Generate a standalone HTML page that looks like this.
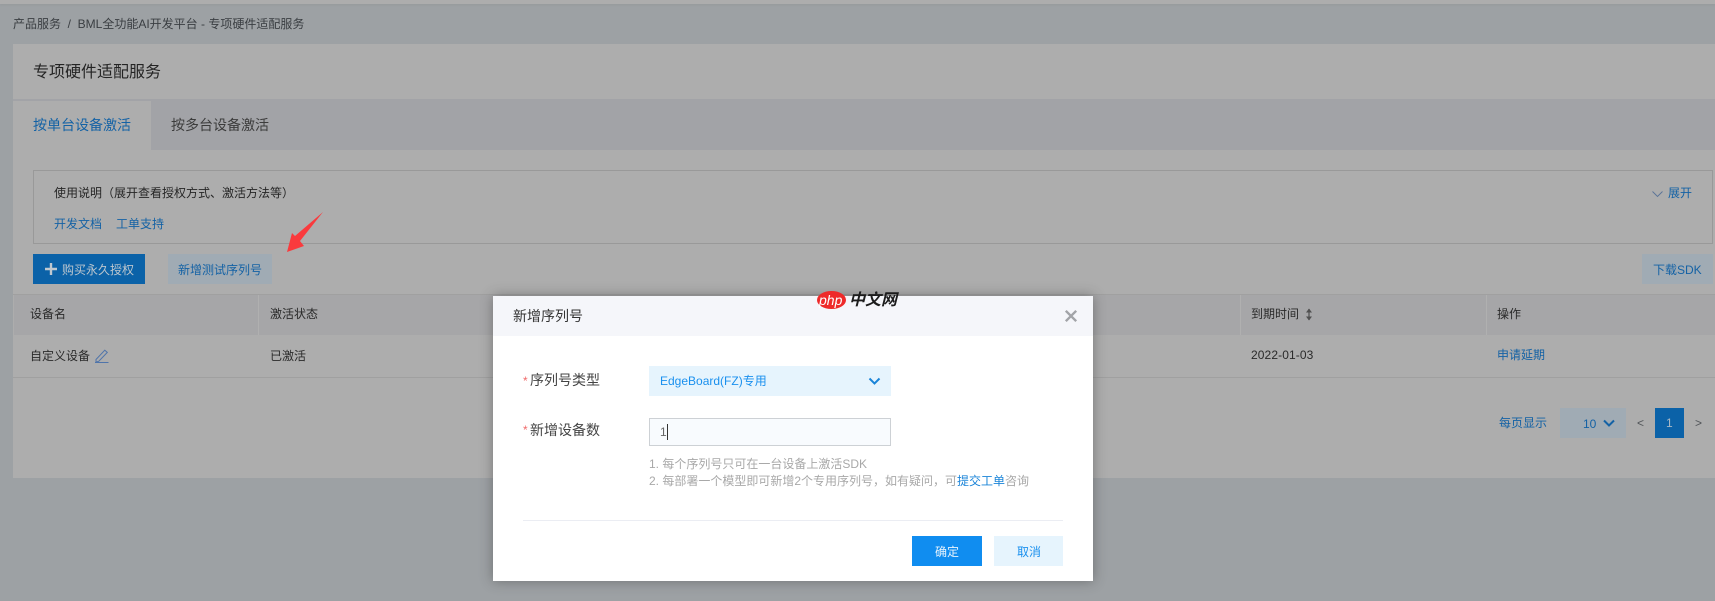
<!DOCTYPE html>
<html lang="zh"><head><meta charset="utf-8"><title>专项硬件适配服务</title>
<style>
html,body{margin:0;padding:0;width:1715px;height:601px;overflow:hidden;background:#9da1a4}
body{position:relative;font-family:"Liberation Sans","Noto Sans CJK SC",sans-serif;font-size:12px;color:#2a2a2a}
.a{position:absolute;box-sizing:border-box}
.t{position:absolute;white-space:nowrap;line-height:18px;height:18px}
.b{color:#1462a5}
svg{position:absolute;overflow:visible}
</style></head><body>
<div class="a" style="left:0;top:0;width:1715px;height:4px;background:#adadad;box-shadow:0 1px 2px rgba(120,120,120,.2)"></div>
<div class="t" style="left:13px;top:15px;color:#3a3e42">产品服务 &nbsp;/ &nbsp;BML全功能AI开发平台 - 专项硬件适配服务</div>

<div class="a" style="left:13px;top:44px;width:1702px;height:434px;background:#adadad"></div>
<div class="a" style="left:13px;top:99px;width:1702px;height:51px;background:#a2a3a7"></div>
<div class="a" style="left:13px;top:101px;width:138px;height:49px;background:#adadad"></div>
<div class="t" style="left:33px;top:62px;font-size:16px;line-height:22px;height:22px;color:#242424">专项硬件适配服务</div>
<div class="t b" style="left:33px;top:115px;font-size:14px;line-height:20px;height:20px">按单台设备激活</div>
<div class="t" style="left:171px;top:115px;font-size:14px;line-height:20px;height:20px;color:#3c3c3c">按多台设备激活</div>

<div class="a" style="left:33px;top:170px;width:1680px;height:74px;border:1px solid #999"></div>
<div class="t" style="left:54px;top:184px;color:#262626">使用说明（展开查看授权方式、激活方法等）</div>
<div class="t b" style="left:54px;top:215px">开发文档</div>
<div class="t b" style="left:116px;top:215px">工单支持</div>
<svg style="left:1652px;top:190px" width="11" height="8"><path d="M.5 1.5 5.5 6.5 10.5 1.5" fill="none" stroke="#5a7397" stroke-width=".9"/></svg>
<div class="t b" style="left:1668px;top:184px">展开</div>

<div class="a" style="left:33px;top:254px;width:112px;height:30px;background:#0b62a8"></div>
<svg style="left:45px;top:263px" width="12" height="12"><path d="M6 0V12M0 6H12" stroke="#c0c9d0" stroke-width="2.4"/></svg>
<div class="t" style="left:62px;top:261px;color:#bcc6ce">购买永久授权</div>
<div class="a" style="left:168px;top:254px;width:104px;height:30px;background:#a0abb4"></div>
<div class="t b" style="left:178px;top:261px">新增测试序列号</div>
<div class="a" style="left:1642px;top:254px;width:71px;height:30px;background:#a0abb4"></div>
<div class="t b" style="left:1653px;top:261px">下载SDK</div>
<svg style="left:0;top:0" width="1715" height="300"><path d="M323 212 295 236 292 233 287 252 304 246 300 241Z" fill="#fa3a3d"/></svg>

<div class="a" style="left:13px;top:294px;width:1702px;height:1px;background:#a0a0a0"></div>
<div class="a" style="left:14px;top:295px;width:1701px;height:40px;background:#a6a6a8"></div>
<div class="a" style="left:258px;top:295px;width:1px;height:40px;background:#b0b0b0"></div>
<div class="a" style="left:1240px;top:295px;width:1px;height:40px;background:#b0b0b0"></div>
<div class="a" style="left:1486px;top:295px;width:1px;height:40px;background:#b0b0b0"></div>
<div class="a" style="left:13px;top:377px;width:1702px;height:1px;background:#a0a0a0"></div>
<div class="t" style="left:30px;top:305px">设备名</div>
<div class="t" style="left:270px;top:305px">激活状态</div>
<div class="t" style="left:1251px;top:305px">到期时间</div>
<svg style="left:1305px;top:308px" width="8" height="13"><path d="M4 1V12" fill="none" stroke="#505050" stroke-width="1.200"/><path d="M1 4.500 4 .5 7 4.500ZM1 8.500 4 12.500 7 8.500Z" fill="#505050"/></svg>
<div class="t" style="left:1497px;top:305px">操作</div>
<div class="t" style="left:30px;top:347px">自定义设备</div>
<svg style="left:95px;top:349px" width="14" height="14"><path d="M1 10.500 9.800 1.200 12.300 3.400 3.700 12.300 1 13ZM0 13.500H13.500" fill="none" stroke="#4f74aa" stroke-width="1"/></svg>
<div class="t" style="left:270px;top:347px">已激活</div>
<div class="t" style="left:1251px;top:346px;letter-spacing:.1px">2022-01-03</div>
<div class="t b" style="left:1497px;top:346px">申请延期</div>

<div class="t b" style="left:1499px;top:414px">每页显示</div>
<div class="a" style="left:1560px;top:408px;width:66px;height:30px;background:#a0abb4"></div>
<div class="t b" style="left:1583px;top:415px">10</div>
<svg style="left:1603px;top:419px" width="12" height="9"><path d="M1 1.500 6 6.500 11 1.500" fill="none" stroke="#1462a5" stroke-width="2"/></svg>
<div class="t" style="left:1637px;top:414px;color:#505458">&lt;</div>
<div class="a" style="left:1655px;top:408px;width:29px;height:30px;background:#0b62a8"></div>
<div class="t" style="left:1666px;top:414px;color:#a9b9c6">1</div>
<div class="t" style="left:1695px;top:414px;color:#505458">&gt;</div>

<div class="a" style="left:493px;top:296px;width:600px;height:285px;background:#fff;box-shadow:0 0 12px rgba(50,50,50,.45)"></div>
<div class="a" style="left:493px;top:296px;width:600px;height:40px;background:#f5f6fa"></div>
<div class="t" style="left:513px;top:306px;font-size:14px;line-height:20px;height:20px;color:#333">新增序列号</div>
<svg style="left:1065px;top:310px" width="12" height="12"><path d="M.800.800 11.200 11.200M11.200.800.800 11.200" stroke="#a2a4a8" stroke-width="2.400"/></svg>

<div class="t" style="left:523px;top:372px;color:#f06a6a;font-size:12px">*</div>
<div class="t" style="left:530px;top:370px;font-size:14px;line-height:20px;height:20px;color:#444">序列号类型</div>
<div class="a" style="left:649px;top:366px;width:242px;height:30px;background:#e6f4fd"></div>
<div class="t" style="left:660px;top:372px;color:#1a90ee">EdgeBoard(FZ)专用</div>
<svg style="left:868px;top:377px" width="13" height="9"><path d="M1.500 1.500 6.500 6.500 11.500 1.500" fill="none" stroke="#1a84d8" stroke-width="2"/></svg>

<div class="t" style="left:523px;top:421px;color:#f06a6a;font-size:12px">*</div>
<div class="t" style="left:530px;top:420px;font-size:14px;line-height:20px;height:20px;color:#444">新增设备数</div>
<div class="a" style="left:649px;top:418px;width:242px;height:28px;border:1px solid #cdd1d5;background:#f8fbfe"></div>
<div class="t" style="left:660px;top:423px;color:#666">1</div>
<div class="a" style="left:667px;top:424px;width:1px;height:16px;background:#333"></div>
<div class="t" style="left:649px;top:455px;color:#a8a8a8">1. 每个序列号只可在一台设备上激活SDK</div>
<div class="t" style="left:649px;top:472px;color:#a8a8a8">2. 每部署一个模型即可新增2个专用序列号，如有疑问，可<span style="color:#1a84d8">提交工单</span>咨询</div>
<div class="a" style="left:523px;top:520px;width:540px;height:1px;background:#ebedf3"></div>
<div class="a" style="left:912px;top:536px;width:70px;height:30px;background:#108df0"></div>
<div class="t" style="left:935px;top:543px;color:#e8f4fd">确定</div>
<div class="a" style="left:994px;top:536px;width:69px;height:30px;background:#e6f4fd"></div>
<div class="t" style="left:1017px;top:543px;color:#1a90ee">取消</div>

<svg style="left:817px;top:291px" width="30" height="19"><ellipse cx="14.500" cy="9" rx="14.500" ry="9" fill="#ee2a2a"/></svg>
<div class="t" style="left:819px;top:291px;font-size:14px;font-style:italic;color:#fff">php</div>
<div class="t" style="left:849px;top:292px;font-size:16px;font-style:italic;font-weight:bold;color:#1c1c1c">中文网</div>
</body></html>
